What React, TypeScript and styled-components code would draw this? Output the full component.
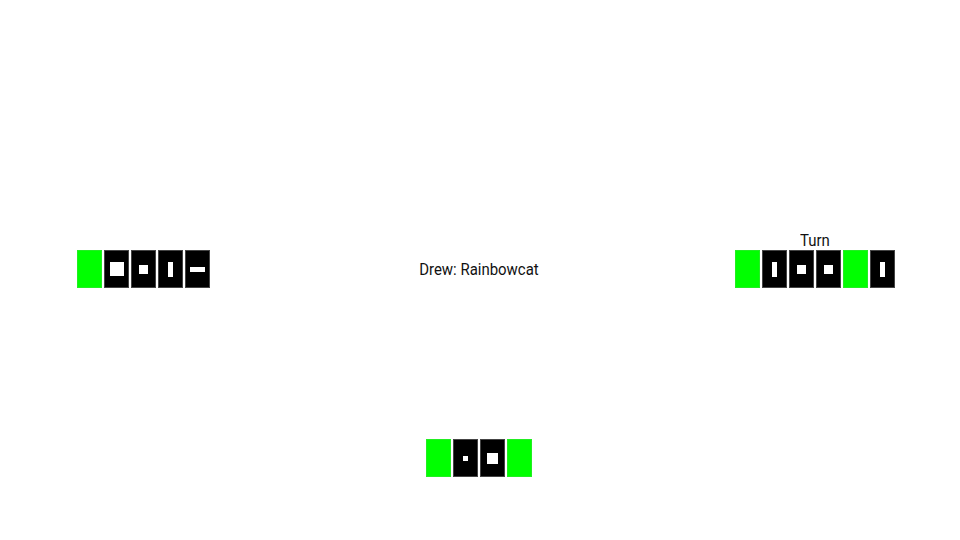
import React from "react";
import styled, { createGlobalStyle } from "styled-components";

type Mark = "none" | "big" | "small" | "tiny" | "mid" | "tall" | "wide";

interface CardData {
  green?: boolean;
  mark?: Mark;
}

const MARKS: Record<Mark, [number, number]> = {
  none: [0, 0],
  big: [14, 14],
  mid: [11, 11],
  small: [9, 9],
  tiny: [5, 5],
  tall: [5, 15],
  wide: [15, 5],
};

const leftHand: CardData[] = [
  { green: true },
  { mark: "big" },
  { mark: "small" },
  { mark: "tall" },
  { mark: "wide" },
];

const rightHand: CardData[] = [
  { green: true },
  { mark: "tall" },
  { mark: "small" },
  { mark: "small" },
  { green: true },
  { mark: "tall" },
];

const bottomHand: CardData[] = [
  { green: true },
  { mark: "tiny" },
  { mark: "mid" },
  { green: true },
];

const GlobalStyle = createGlobalStyle`
  html, body {
    margin: 0;
    padding: 0;
    background: #ffffff;
  }
  body {
    font-family: Roboto, "Liberation Sans", sans-serif;
  }
`;

const Hand = ({ cards, turn }: { cards: CardData[]; turn?: boolean }) => (
  <HandWrap>
    {turn && (
      <TurnLabel>
        <Condensed>Turn</Condensed>
      </TurnLabel>
    )}
    <CardRow>
      {cards.map((card, i) => {
        const [w, h] = MARKS[card.mark ?? "none"];
        return (
          <Card key={i} $green={card.green}>
            {!card.green && w > 0 && <Pip $w={w} $h={h} />}
          </Card>
        );
      })}
    </CardRow>
  </HandWrap>
);

export default function App() {
  return (
    <>
      <GlobalStyle />
      <Table>
        <Seat />
        <Seat />
        <Seat />

        <Seat>
          <Hand cards={leftHand} />
        </Seat>
        <Seat>
          <Condensed>Drew: Rainbowcat</Condensed>
        </Seat>
        <Seat>
          <Hand cards={rightHand} turn />
        </Seat>

        <Seat />
        <BottomSeat>
          <Hand cards={bottomHand} />
        </BottomSeat>
        <Seat />
      </Table>
    </>
  );
}

const Table = styled.div`
  display: grid;
  grid-template-columns: 287px 1fr 290px;
  grid-template-rows: 179px 180px 181px;
  width: 960px;
  height: 540px;
`;

const Seat = styled.div`
  display: flex;
  align-items: center;
  justify-content: center;
`;

const BottomSeat = styled(Seat)`
  padding-top: 17px;
`;

const HandWrap = styled.div`
  position: relative;
`;

const TurnLabel = styled.div`
  position: absolute;
  left: 0;
  right: 0;
  bottom: 100%;
  display: flex;
  justify-content: center;
  line-height: 20px;
`;

/* narrow face: no condensed family installed, so squeeze Roboto */
const Condensed = styled.span`
  display: inline-block;
  font-size: 17px;
  line-height: 20px;
  color: #111;
  white-space: nowrap;
  transform: scaleX(0.88);
`;

const CardRow = styled.div`
  display: flex;
  gap: 2px;
`;

const Card = styled.div<{ $green?: boolean }>`
  box-sizing: border-box;
  width: 25px;
  height: 38px;
  display: flex;
  align-items: center;
  justify-content: center;
  background: ${({ $green }) => ($green ? "#00ff00" : "#000000")};
  border: 1px solid ${({ $green }) => ($green ? "#22ee22" : "#444444")};
`;

const Pip = styled.div<{ $w: number; $h: number }>`
  width: ${({ $w }) => $w}px;
  height: ${({ $h }) => $h}px;
  background: #ffffff;
`;
